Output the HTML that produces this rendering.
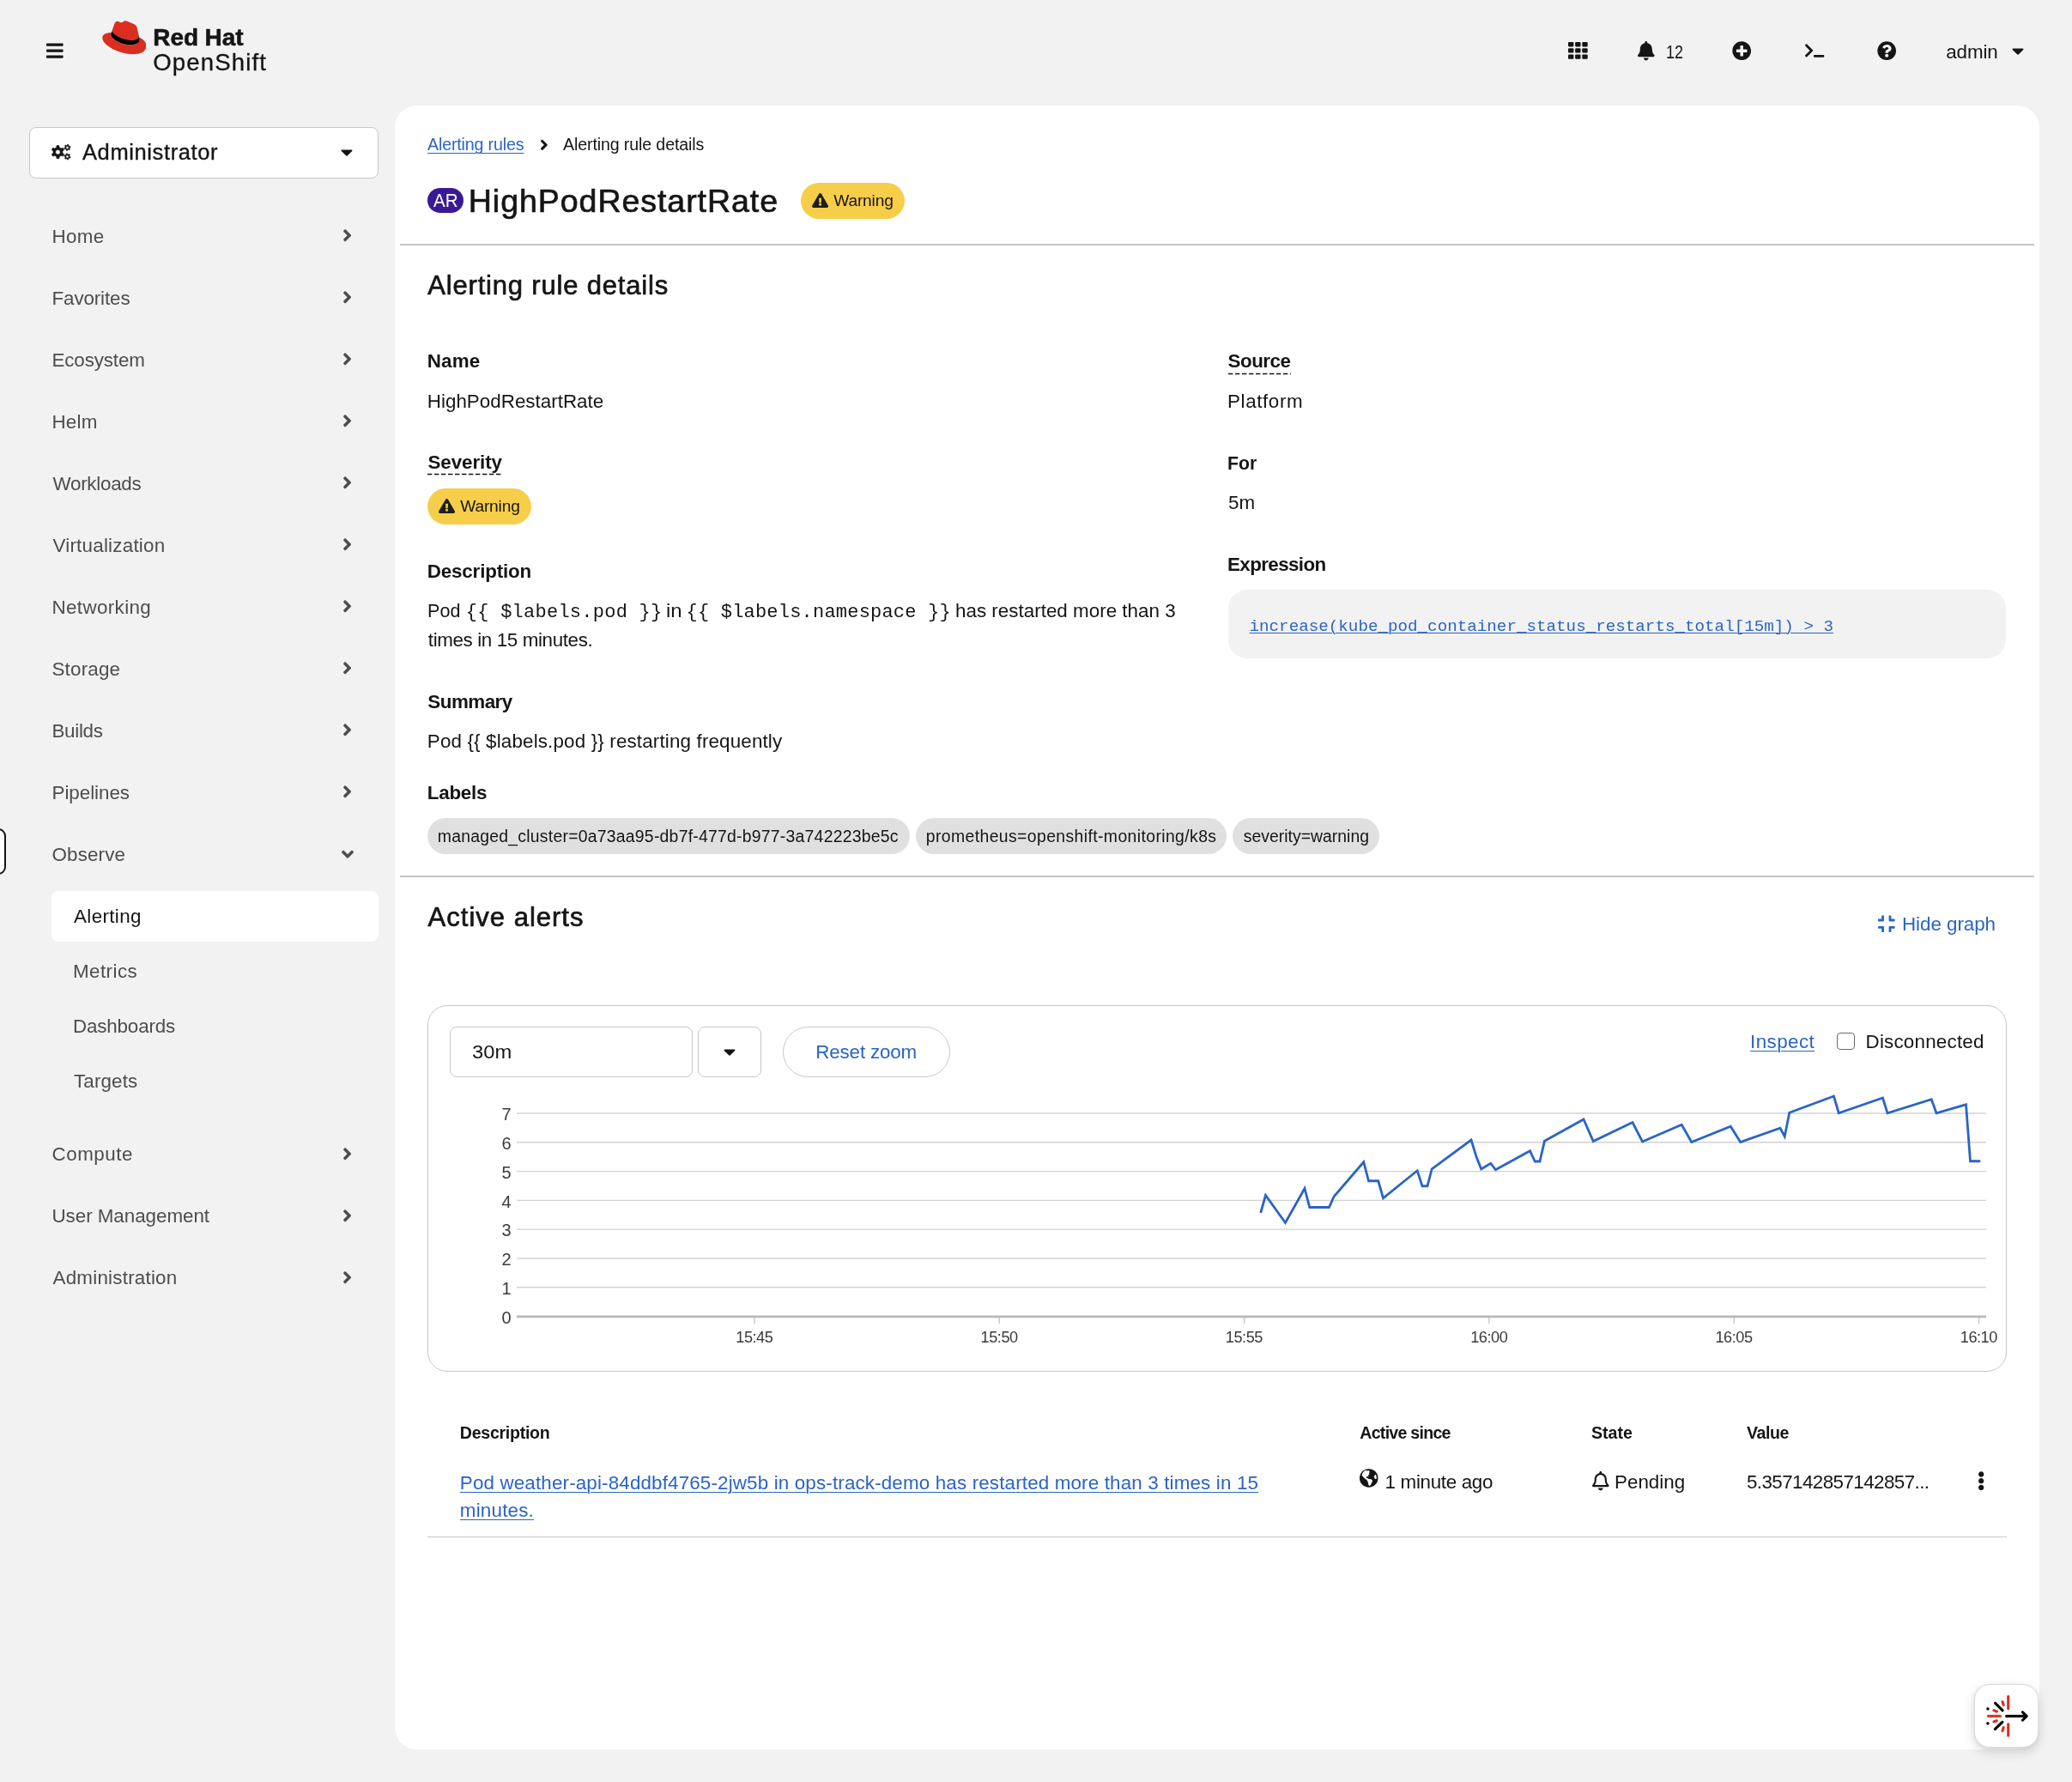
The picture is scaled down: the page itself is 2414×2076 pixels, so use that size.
<!DOCTYPE html>
<html lang="en"><head><meta charset="utf-8"><title>HighPodRestartRate · Alerting rule details · OpenShift</title>
<style>
html,body{margin:0;padding:0;}
body{width:2414px;height:2076px;position:relative;overflow:hidden;background:#f2f2f2;font-family:"Liberation Sans",sans-serif;color:#151515;}
.b{position:absolute;display:block;}
.t{position:absolute;white-space:pre;line-height:1;font-family:"Liberation Sans",sans-serif;transform-origin:0 50%;}
.m{font-family:"Liberation Mono",monospace;}
.u{text-decoration:underline;text-decoration-thickness:1.4px;text-underline-offset:3px;}
.m.u{text-underline-offset:1.5px;}
#root{position:absolute;left:0;top:0;width:2414px;height:2076px;overflow:hidden;will-change:transform;}
</style></head>
<body>
<div id="root">
<div class="b" style="left:460px;top:123px;width:1916px;height:1915px;background:#fff;border-radius:25.5px;"></div>
<svg class="b" style="left:54.2px;top:48.4px;overflow:visible;" width="19.6" height="22.4" viewBox="0 0 448 512"><path fill="#151515" d="M16 132h416c8.837 0 16-7.163 16-16V76c0-8.837-7.163-16-16-16H16C7.163 60 0 67.163 0 76v40c0 8.837 7.163 16 16 16zm0 160h416c8.837 0 16-7.163 16-16v-40c0-8.837-7.163-16-16-16H16c-8.837 0-16 7.163-16 16v40c0 8.837 7.163 16 16 16zm0 160h416c8.837 0 16-7.163 16-16v-40c0-8.837-7.163-16-16-16H16c-8.837 0-16 7.163-16 16v40c0 8.837 7.163 16 16 16z"/></svg>
<svg class="b" style="left:118.6px;top:23.6px;" width="51.7" height="39.1" viewBox="0 0 192 145"><path fill="#da2f20" d="M128,84c12.5,0,30.6-2.6,30.6-17.5a19.53,19.53,0,0,0-.3-3.4L150.9,30.7c-1.7-7.1-3.2-10.3-15.7-16.6C125.5,9.1,104.4,1,98.1,1,92.2,1,90.5,8.500,83.600,8.500c-6.700,0-11.600-5.600-17.900-5.600-6,0-9.900,4.100-12.900,12.500,0,0-8.400,23.700-9.500,27.200A6.150,6.150,0,0,0,43,44.500c0,9.200,36.300,39.500,85,39.500m32.500-11.400c1.700,8.200,1.700,9.100,1.700,10.100,0,14-15.700,21.800-36.400,21.800C79,104.500,38.100,77.100,38.100,59a18.350,18.350,0,0,1,1.500-7.300C22.800,52.500,1,55.500,1,74.700c0,31.500,74.600,70.300,133.700,70.300,45.300,0,56.700-20.500,56.700-36.700,0-12.700-11-27.100-30.900-35.700"/><path fill="#000" d="M160.500,72.600c1.700,8.200,1.700,9.100,1.700,10.100,0,14-15.700,21.800-36.400,21.800C79,104.500,38.100,77.100,38.100,59a18.350,18.350,0,0,1,1.500-7.300l3.700-9.100A6.150,6.150,0,0,0,43,44.500c0,9.200,36.300,39.500,85,39.500,12.500,0,30.600-2.600,30.600-17.500a19.530,19.530,0,0,0-.3-3.400Z"/></svg>
<svg class="b" style="left:1827px;top:49.3px;" width="23" height="20" viewBox="0 0 23 20"><g fill="#151515"><rect x="0.00" y="0.00" width="6.4" height="5.4" rx="1.1"/><rect x="8.15" y="0.00" width="6.4" height="5.4" rx="1.1"/><rect x="16.30" y="0.00" width="6.4" height="5.4" rx="1.1"/><rect x="0.00" y="7.20" width="6.4" height="5.4" rx="1.1"/><rect x="8.15" y="7.20" width="6.4" height="5.4" rx="1.1"/><rect x="16.30" y="7.20" width="6.4" height="5.4" rx="1.1"/><rect x="0.00" y="14.40" width="6.4" height="5.4" rx="1.1"/><rect x="8.15" y="14.40" width="6.4" height="5.4" rx="1.1"/><rect x="16.30" y="14.40" width="6.4" height="5.4" rx="1.1"/></g></svg>
<svg class="b" style="left:1908.3px;top:47.8px;overflow:visible;" width="19.6" height="22.4" viewBox="0 0 448 512"><path fill="#151515" d="M224 512c35.32 0 63.97-28.65 63.97-64H160.03c0 35.35 28.65 64 63.97 64zm215.39-149.71c-19.32-20.76-55.47-51.99-55.47-154.29 0-77.7-54.48-139.9-127.94-155.16V32c0-17.67-14.32-32-31.98-32s-31.98 14.33-31.98 32v20.84C118.56 68.1 64.08 130.3 64.08 208c0 102.3-36.15 133.53-55.47 154.29-6 6.45-8.66 14.16-8.61 21.71.11 16.4 12.98 32 32.1 32h383.8c19.12 0 32-15.6 32.1-32 .05-7.55-2.61-15.27-8.61-21.71z"/></svg>
<svg class="b" style="left:2017.8px;top:47.8px;overflow:visible;" width="22.4" height="22.4" viewBox="0 0 512 512"><path fill="#151515" d="M256 8C119 8 8 119 8 256s111 248 248 248 248-111 248-248S393 8 256 8zm144 276c0 6.6-5.4 12-12 12h-92v92c0 6.6-5.4 12-12 12h-56c-6.6 0-12-5.4-12-12v-92h-92c-6.6 0-12-5.4-12-12v-56c0-6.6 5.4-12 12-12h92v-92c0-6.6 5.4-12 12-12h56c6.6 0 12 5.4 12 12v92h92c6.6 0 12 5.4 12 12v56z"/></svg>
<svg class="b" style="left:2102.7px;top:50.4px;overflow:visible;" width="22.3" height="17.84" viewBox="0 0 640 512"><path fill="#151515" d="M257.981 272.971L63.638 467.314c-9.373 9.373-24.569 9.373-33.941 0L7.029 444.647c-9.357-9.357-9.375-24.522-.04-33.901L161.011 256 6.99 101.255c-9.335-9.379-9.317-24.544.04-33.901l22.667-22.667c9.373-9.373 24.569-9.373 33.941 0L257.981 239.03c9.373 9.372 9.373 24.568 0 33.941zM640 456v-32c0-13.255-10.745-24-24-24H312c-13.255 0-24 10.745-24 24v32c0 13.255 10.745 24 24 24h304c13.255 0 24-10.745 24-24z"/></svg>
<svg class="b" style="left:2187px;top:48px;overflow:visible;" width="22.4" height="22.4" viewBox="0 0 512 512"><path fill="#151515" d="M504 256c0 136.997-111.043 248-248 248S8 392.997 8 256C8 119.083 119.043 8 256 8s248 111.083 248 248zM262.655 90c-54.497 0-89.255 22.957-116.549 63.758-3.536 5.286-2.353 12.415 2.715 16.258l34.699 26.31c5.205 3.947 12.621 3.008 16.665-2.122 17.864-22.658 30.113-35.797 57.303-35.797 20.429 0 45.698 13.148 45.698 32.958 0 14.976-12.363 22.667-32.534 33.976C247.128 238.528 216 254.941 216 296v4c0 6.627 5.373 12 12 12h56c6.627 0 12-5.373 12-12v-1.333c0-28.462 83.186-29.647 83.186-106.667 0-58.002-60.165-102-116.531-102zM256 338c-25.365 0-46 20.635-46 46 0 25.364 20.635 46 46 46s46-20.636 46-46c0-25.365-20.635-46-46-46z"/></svg>
<svg class="b" style="left:2344.3px;top:47.8px;overflow:visible;" width="14" height="22.4" viewBox="0 0 320 512"><path fill="#151515" d="M31.3 192h257.3c17.8 0 26.7 21.5 14.1 34.1L174.1 354.8c-7.8 7.8-20.5 7.8-28.3 0L17.2 226.1C4.6 213.5 13.5 192 31.3 192z"/></svg>
<div class="b" style="left:34px;top:148px;width:407px;height:59.5px;background:#fff;border:1.4px solid #c7c7c7;box-sizing:border-box;border-radius:8px;"></div>
<svg class="b" style="left:0;top:0;" width="120" height="220" viewBox="0 0 120 220"><path fill="#151515" fill-rule="evenodd" stroke="#151515" stroke-width="0.6" stroke-linejoin="round" d="M69.18 171.82 L68.81 169.57 L66.09 169.57 L65.72 171.82 L63.70 172.99 L61.57 172.18 L60.21 174.54 L61.97 175.99 L61.97 178.31 L60.21 179.76 L61.57 182.12 L63.70 181.31 L65.72 182.48 L66.09 184.73 L68.81 184.73 L69.18 182.48 L71.20 181.31 L73.33 182.12 L74.69 179.76 L72.93 178.31 L72.93 175.99 L74.69 174.54 L73.33 172.18 L71.20 172.99Z M64.70 177.15 a2.75 2.75 0 1 0 5.5 0 a2.75 2.75 0 1 0 -5.5 0Z M79.85 169.56 L79.90 168.47 L78.62 168.20 L78.22 169.21 L77.15 169.56 L76.23 168.98 L75.36 169.95 L76.03 170.80 L75.80 171.90 L74.83 172.40 L75.24 173.65 L76.32 173.49 L77.15 174.24 L77.10 175.33 L78.38 175.60 L78.78 174.59 L79.85 174.24 L80.77 174.82 L81.64 173.85 L80.97 173.00 L81.20 171.90 L82.17 171.40 L81.76 170.15 L80.68 170.31Z M76.95 171.90 a1.55 1.55 0 1 0 3.1 0 a1.55 1.55 0 1 0 -3.1 0Z M78.78 179.71 L78.38 178.70 L77.10 178.97 L77.15 180.06 L76.32 180.81 L75.24 180.65 L74.83 181.90 L75.80 182.40 L76.03 183.50 L75.36 184.35 L76.23 185.32 L77.15 184.74 L78.22 185.09 L78.62 186.10 L79.90 185.83 L79.85 184.74 L80.68 183.99 L81.76 184.15 L82.17 182.90 L81.20 182.40 L80.97 181.30 L81.64 180.45 L80.77 179.48 L79.85 180.06Z M76.95 182.40 a1.55 1.55 0 1 0 3.1 0 a1.55 1.55 0 1 0 -3.1 0Z"/></svg>
<svg class="b" style="left:396.5px;top:166.3px;overflow:visible;" width="14" height="22.4" viewBox="0 0 320 512"><path fill="#151515" d="M31.3 192h257.3c17.8 0 26.7 21.5 14.1 34.1L174.1 354.8c-7.8 7.8-20.5 7.8-28.3 0L17.2 226.1C4.6 213.5 13.5 192 31.3 192z"/></svg>
<svg class="b" style="left:398.6px;top:263.3px;overflow:visible;" width="11.2" height="22.4" viewBox="0 0 256 512"><path fill="#4d4d4d" d="M224.3 273l-136 136c-9.4 9.4-24.6 9.4-33.9 0l-22.6-22.6c-9.4-9.4-9.4-24.6 0-33.9l96.4-96.4-96.4-96.4c-9.4-9.4-9.4-24.6 0-33.9L54.3 103c9.4-9.4 24.6-9.4 33.9 0l136 136c9.5 9.4 9.5 24.6.1 34z"/></svg>
<svg class="b" style="left:398.6px;top:335.3px;overflow:visible;" width="11.2" height="22.4" viewBox="0 0 256 512"><path fill="#4d4d4d" d="M224.3 273l-136 136c-9.4 9.4-24.6 9.4-33.9 0l-22.6-22.6c-9.4-9.4-9.4-24.6 0-33.9l96.4-96.4-96.4-96.4c-9.4-9.4-9.4-24.6 0-33.9L54.3 103c9.4-9.4 24.6-9.4 33.9 0l136 136c9.5 9.4 9.5 24.6.1 34z"/></svg>
<svg class="b" style="left:398.6px;top:407.3px;overflow:visible;" width="11.2" height="22.4" viewBox="0 0 256 512"><path fill="#4d4d4d" d="M224.3 273l-136 136c-9.4 9.4-24.6 9.4-33.9 0l-22.6-22.6c-9.4-9.4-9.4-24.6 0-33.9l96.4-96.4-96.4-96.4c-9.4-9.4-9.4-24.6 0-33.9L54.3 103c9.4-9.4 24.6-9.4 33.9 0l136 136c9.5 9.4 9.5 24.6.1 34z"/></svg>
<svg class="b" style="left:398.6px;top:479.3px;overflow:visible;" width="11.2" height="22.4" viewBox="0 0 256 512"><path fill="#4d4d4d" d="M224.3 273l-136 136c-9.4 9.4-24.6 9.4-33.9 0l-22.6-22.6c-9.4-9.4-9.4-24.6 0-33.9l96.4-96.4-96.4-96.4c-9.4-9.4-9.4-24.6 0-33.9L54.3 103c9.4-9.4 24.6-9.4 33.9 0l136 136c9.5 9.4 9.5 24.6.1 34z"/></svg>
<svg class="b" style="left:398.6px;top:551.3px;overflow:visible;" width="11.2" height="22.4" viewBox="0 0 256 512"><path fill="#4d4d4d" d="M224.3 273l-136 136c-9.4 9.4-24.6 9.4-33.9 0l-22.6-22.6c-9.4-9.4-9.4-24.6 0-33.9l96.4-96.4-96.4-96.4c-9.4-9.4-9.4-24.6 0-33.9L54.3 103c9.4-9.4 24.6-9.4 33.9 0l136 136c9.5 9.4 9.5 24.6.1 34z"/></svg>
<svg class="b" style="left:398.6px;top:623.3px;overflow:visible;" width="11.2" height="22.4" viewBox="0 0 256 512"><path fill="#4d4d4d" d="M224.3 273l-136 136c-9.4 9.4-24.6 9.4-33.9 0l-22.6-22.6c-9.4-9.4-9.4-24.6 0-33.9l96.4-96.4-96.4-96.4c-9.4-9.4-9.4-24.6 0-33.9L54.3 103c9.4-9.4 24.6-9.4 33.9 0l136 136c9.5 9.4 9.5 24.6.1 34z"/></svg>
<svg class="b" style="left:398.6px;top:695.3px;overflow:visible;" width="11.2" height="22.4" viewBox="0 0 256 512"><path fill="#4d4d4d" d="M224.3 273l-136 136c-9.4 9.4-24.6 9.4-33.9 0l-22.6-22.6c-9.4-9.4-9.4-24.6 0-33.9l96.4-96.4-96.4-96.4c-9.4-9.4-9.4-24.6 0-33.9L54.3 103c9.4-9.4 24.6-9.4 33.9 0l136 136c9.5 9.4 9.5 24.6.1 34z"/></svg>
<svg class="b" style="left:398.6px;top:767.3px;overflow:visible;" width="11.2" height="22.4" viewBox="0 0 256 512"><path fill="#4d4d4d" d="M224.3 273l-136 136c-9.4 9.4-24.6 9.4-33.9 0l-22.6-22.6c-9.4-9.4-9.4-24.6 0-33.9l96.4-96.4-96.4-96.4c-9.4-9.4-9.4-24.6 0-33.9L54.3 103c9.4-9.4 24.6-9.4 33.9 0l136 136c9.5 9.4 9.5 24.6.1 34z"/></svg>
<svg class="b" style="left:398.6px;top:839.3px;overflow:visible;" width="11.2" height="22.4" viewBox="0 0 256 512"><path fill="#4d4d4d" d="M224.3 273l-136 136c-9.4 9.4-24.6 9.4-33.9 0l-22.6-22.6c-9.4-9.4-9.4-24.6 0-33.9l96.4-96.4-96.4-96.4c-9.4-9.4-9.4-24.6 0-33.9L54.3 103c9.4-9.4 24.6-9.4 33.9 0l136 136c9.5 9.4 9.5 24.6.1 34z"/></svg>
<svg class="b" style="left:398.6px;top:911.3px;overflow:visible;" width="11.2" height="22.4" viewBox="0 0 256 512"><path fill="#4d4d4d" d="M224.3 273l-136 136c-9.4 9.4-24.6 9.4-33.9 0l-22.6-22.6c-9.4-9.4-9.4-24.6 0-33.9l96.4-96.4-96.4-96.4c-9.4-9.4-9.4-24.6 0-33.9L54.3 103c9.4-9.4 24.6-9.4 33.9 0l136 136c9.5 9.4 9.5 24.6.1 34z"/></svg>
<svg class="b" style="left:398.3px;top:984.2px;overflow:visible;" width="14" height="22.4" viewBox="0 0 320 512"><path fill="#4d4d4d" d="M143 352.3L7 216.3c-9.4-9.4-9.4-24.6 0-33.9l22.6-22.6c9.4-9.4 24.6-9.4 33.9 0l96.4 96.4 96.4-96.4c9.4-9.4 24.6-9.4 33.9 0l22.6 22.6c9.4 9.4 9.4 24.6 0 33.9l-136 136c-9.2 9.4-24.4 9.4-33.8 0z"/></svg>
<svg class="b" style="left:398.6px;top:1332.8px;overflow:visible;" width="11.2" height="22.4" viewBox="0 0 256 512"><path fill="#4d4d4d" d="M224.3 273l-136 136c-9.4 9.4-24.6 9.4-33.9 0l-22.6-22.6c-9.4-9.4-9.4-24.6 0-33.9l96.4-96.4-96.4-96.4c-9.4-9.4-9.4-24.6 0-33.9L54.3 103c9.4-9.4 24.6-9.4 33.9 0l136 136c9.5 9.4 9.5 24.6.1 34z"/></svg>
<svg class="b" style="left:398.6px;top:1404.8px;overflow:visible;" width="11.2" height="22.4" viewBox="0 0 256 512"><path fill="#4d4d4d" d="M224.3 273l-136 136c-9.4 9.4-24.6 9.4-33.9 0l-22.6-22.6c-9.4-9.4-9.4-24.6 0-33.9l96.4-96.4-96.4-96.4c-9.4-9.4-9.4-24.6 0-33.9L54.3 103c9.4-9.4 24.6-9.4 33.9 0l136 136c9.5 9.4 9.5 24.6.1 34z"/></svg>
<svg class="b" style="left:398.6px;top:1476.8px;overflow:visible;" width="11.2" height="22.4" viewBox="0 0 256 512"><path fill="#4d4d4d" d="M224.3 273l-136 136c-9.4 9.4-24.6 9.4-33.9 0l-22.6-22.6c-9.4-9.4-9.4-24.6 0-33.9l96.4-96.4-96.4-96.4c-9.4-9.4-9.4-24.6 0-33.9L54.3 103c9.4-9.4 24.6-9.4 33.9 0l136 136c9.5 9.4 9.5 24.6.1 34z"/></svg>
<div class="b" style="left:60px;top:1038px;width:381px;height:59px;background:#fff;border-radius:8px;"></div>
<div class="b" style="left:-20px;top:965px;width:27px;height:54px;background:#fff;border:2.4px solid #151515;box-sizing:border-box;border-radius:9px;"></div>
<svg class="b" style="left:628.6px;top:159px;overflow:visible;" width="9.8" height="19.6" viewBox="0 0 256 512"><path fill="#151515" d="M224.3 273l-136 136c-9.4 9.4-24.6 9.4-33.9 0l-22.6-22.6c-9.4-9.4-9.4-24.6 0-33.9l96.4-96.4-96.4-96.4c-9.4-9.4-9.4-24.6 0-33.9L54.3 103c9.4-9.4 24.6-9.4 33.9 0l136 136c9.5 9.4 9.5 24.6.1 34z"/></svg>
<div class="b" style="left:498px;top:219px;width:42px;height:29px;background:#3a1a94;border-radius:14.5px;"></div>
<div class="b" style="left:933px;top:213px;width:121px;height:42px;background:#f7ce4a;border-radius:21px;"></div>
<svg class="b" style="left:945.8px;top:225.0px;overflow:visible;" width="19.1" height="17.0" viewBox="0 0 576 512"><path fill="#1f1f1f" d="M569.517 440.013C587.975 472.007 564.806 512 527.94 512H48.054c-36.937 0-59.999-40.055-41.577-71.987L246.423 23.985c18.467-32.009 64.72-31.951 83.154 0l239.94 416.028zM288 354c-25.405 0-46 20.595-46 46s20.595 46 46 46 46-20.595 46-46-20.595-46-46-46zm-43.673-165.346l7.418 136c.347 6.364 5.609 11.346 11.982 11.346h48.546c6.373 0 11.635-4.982 11.982-11.346l7.418-136c.375-6.874-5.098-12.654-11.982-12.654h-63.383c-6.884 0-12.356 5.78-11.981 12.654z"/></svg>
<div class="b" style="left:466px;top:284.0px;width:1904px;height:2px;background:#c5c5c5;"></div>
<svg class="b" style="left:498px;top:551px;" width="88" height="3" viewBox="0 0 88 3"><line x1="0" x2="88" y1="1.5" y2="1.5" stroke="#151515" stroke-width="1.7" stroke-dasharray="5.4 2.6"/></svg>
<div class="b" style="left:498px;top:569px;width:121px;height:42px;background:#f7ce4a;border-radius:21px;"></div>
<svg class="b" style="left:510.8px;top:581.0px;overflow:visible;" width="19.1" height="17.0" viewBox="0 0 576 512"><path fill="#1f1f1f" d="M569.517 440.013C587.975 472.007 564.806 512 527.94 512H48.054c-36.937 0-59.999-40.055-41.577-71.987L246.423 23.985c18.467-32.009 64.72-31.951 83.154 0l239.94 416.028zM288 354c-25.405 0-46 20.595-46 46s20.595 46 46 46 46-20.595 46-46-20.595-46-46-46zm-43.673-165.346l7.418 136c.347 6.364 5.609 11.346 11.982 11.346h48.546c6.373 0 11.635-4.982 11.982-11.346l7.418-136c.375-6.874-5.098-12.654-11.982-12.654h-63.383c-6.884 0-12.356 5.78-11.981 12.654z"/></svg>
<div class="b" style="left:498px;top:953px;width:562px;height:42px;background:#e0e0e0;border-radius:21px;"></div>
<div class="b" style="left:1067px;top:953px;width:362px;height:42px;background:#e0e0e0;border-radius:21px;"></div>
<div class="b" style="left:1436px;top:953px;width:171px;height:42px;background:#e0e0e0;border-radius:21px;"></div>
<svg class="b" style="left:1430.5px;top:433.5px;" width="73.5" height="3" viewBox="0 0 73.5 3"><line x1="0" x2="73.5" y1="1.5" y2="1.5" stroke="#151515" stroke-width="1.7" stroke-dasharray="5.4 2.6"/></svg>
<div class="b" style="left:1431px;top:687px;width:906px;height:80px;background:#f2f2f2;border-radius:22px;"></div>
<div class="b" style="left:466px;top:1020px;width:1904px;height:2px;background:#c5c5c5;"></div>
<svg class="b" style="left:2188.2px;top:1064.8px;overflow:visible;" width="19.6" height="22.4" viewBox="0 0 448 512"><path fill="#2a64c5" d="M436 192H312c-13.3 0-24-10.700-24-24V44c0-6.600 5.400-12 12-12h40c6.600 0 12 5.400 12 12v84h84c6.600 0 12 5.400 12 12v40c0 6.600-5.400 12-12 12zm-276-24V44c0-6.600-5.400-12-12-12h-40c-6.600 0-12 5.400-12 12v84H12c-6.600 0-12 5.400-12 12v40c0 6.600 5.400 12 12 12h124c13.300 0 24-10.700 24-24zm0 300V344c0-13.300-10.700-24-24-24H12c-6.600 0-12 5.400-12 12v40c0 6.600 5.400 12 12 12h84v84c0 6.600 5.400 12 12 12h40c6.600 0 12-5.400 12-12zm192 0v-84h84c6.600 0 12-5.400 12-12v-40c0-6.600-5.400-12-12-12H312c-13.300 0-24 10.700-24 24v124c0 6.600 5.400 12 12 12h40c6.600 0 12-5.400 12-12z"/></svg>
<div class="b" style="left:498px;top:1171px;width:1840px;height:426.5px;background:#fff;border:1.4px solid #c7c7c7;box-sizing:border-box;border-radius:23px;"></div>
<div class="b" style="left:524px;top:1196px;width:283px;height:59px;background:#fff;border:1.4px solid #c7c7c7;box-sizing:border-box;border-radius:8px;"></div>
<div class="b" style="left:813px;top:1196px;width:74px;height:59px;background:#fff;border:1.4px solid #c7c7c7;box-sizing:border-box;border-radius:8px;"></div>
<svg class="b" style="left:843px;top:1214px;overflow:visible;" width="14" height="22.4" viewBox="0 0 320 512"><path fill="#151515" d="M31.3 192h257.3c17.8 0 26.7 21.5 14.1 34.1L174.1 354.8c-7.8 7.8-20.5 7.8-28.3 0L17.2 226.1C4.6 213.5 13.5 192 31.3 192z"/></svg>
<div class="b" style="left:912px;top:1196px;width:195px;height:59px;background:#fff;border:1.4px solid #c7c7c7;box-sizing:border-box;border-radius:29.5px;"></div>
<div class="b" style="left:2140px;top:1202.5px;width:20.5px;height:20.5px;background:#fff;border:1.6px solid #6a6a6a;box-sizing:border-box;border-radius:4px;"></div>
<svg class="b" style="left:0;top:0;" width="2414" height="2076" viewBox="0 0 2414 2076"><line x1="602" x2="2314" y1="1499.72" y2="1499.72" stroke="#d2d2d2" stroke-width="1.4"/><line x1="602" x2="2314" y1="1465.94" y2="1465.94" stroke="#d2d2d2" stroke-width="1.4"/><line x1="602" x2="2314" y1="1432.16" y2="1432.16" stroke="#d2d2d2" stroke-width="1.4"/><line x1="602" x2="2314" y1="1398.38" y2="1398.38" stroke="#d2d2d2" stroke-width="1.4"/><line x1="602" x2="2314" y1="1364.60" y2="1364.60" stroke="#d2d2d2" stroke-width="1.4"/><line x1="602" x2="2314" y1="1330.82" y2="1330.82" stroke="#d2d2d2" stroke-width="1.4"/><line x1="602" x2="2314" y1="1297.04" y2="1297.04" stroke="#d2d2d2" stroke-width="1.4"/><line x1="602" x2="2314" y1="1533.80" y2="1533.80" stroke="#b8b8b8" stroke-width="2.8"/><line x1="879.0" x2="879.0" y1="1535.0" y2="1542.0" stroke="#c7c7c7" stroke-width="1.4"/><line x1="1164.3" x2="1164.3" y1="1535.0" y2="1542.0" stroke="#c7c7c7" stroke-width="1.4"/><line x1="1449.6" x2="1449.6" y1="1535.0" y2="1542.0" stroke="#c7c7c7" stroke-width="1.4"/><line x1="1734.9" x2="1734.9" y1="1535.0" y2="1542.0" stroke="#c7c7c7" stroke-width="1.4"/><line x1="2020.2" x2="2020.2" y1="1535.0" y2="1542.0" stroke="#c7c7c7" stroke-width="1.4"/><line x1="2305.5" x2="2305.5" y1="1535.0" y2="1542.0" stroke="#c7c7c7" stroke-width="1.4"/><polyline fill="none" stroke="#2a64c5" stroke-width="2.8" stroke-linejoin="miter" points="1468.75,1413.00 1474.50,1392.50 1497.50,1424.50 1520.00,1384.50 1525.75,1406.50 1548.50,1406.50 1554.25,1393.75 1588.75,1353.75 1594.50,1375.75 1605.75,1375.75 1611.50,1395.75 1651.25,1363.75 1657.00,1381.75 1663.00,1381.75 1668.25,1361.75 1714.00,1328.00 1720.00,1347.50 1725.75,1362.00 1736.75,1355.25 1742.50,1362.75 1782.50,1340.75 1788.25,1353.00 1794.00,1353.00 1799.50,1329.25 1845.00,1304.00 1856.25,1329.50 1902.00,1307.50 1913.50,1330.00 1959.25,1310.25 1970.75,1330.50 2016.25,1312.25 2027.75,1330.50 2074.00,1314.25 2079.25,1324.00 2084.75,1296.25 2136.50,1277.00 2142.25,1296.75 2193.50,1279.00 2199.00,1296.75 2250.25,1280.75 2256.00,1296.75 2290.50,1286.75 2295.50,1352.75 2307.25,1352.75"/></svg>
<svg class="b" style="left:1584.4px;top:1711.0px;" width="22" height="22" viewBox="0 0 22 22"><circle cx="10.75" cy="10.95" r="10.75" fill="#151515"/><path fill="#fff" d="M6.86 1.65 L9.18 2.52 L10.63 2.09 L11.79 3.39 L10.92 5.13 L11.64 6.28 L9.90 7.44 L10.63 8.89 L8.02 9.18 L7.44 10.34 L9.47 11.21 L10.92 12.08 L13.52 12.37 L15.12 14.10 L13.52 17.87 L12.08 19.90 L10.63 19.61 L9.47 14.97 L8.31 12.95 L5.71 11.21 L3.68 8.89 L2.52 7.44 L3.39 5.13 L5.13 3.10Z"/><path fill="#fff" d="M18.16 6.86 L19.17 7.44 L19.75 9.76 L19.61 12.08 L17.87 11.79 L16.71 9.76Z"/></svg>
<svg class="b" style="left:1855.3px;top:1714px;overflow:visible;" width="19.6" height="22.4" viewBox="0 0 448 512"><path fill="#151515" d="M439.39 362.29c-19.32-20.76-55.47-51.99-55.47-154.29 0-77.7-54.48-139.9-127.94-155.16V32c0-17.67-14.32-32-31.98-32s-31.98 14.33-31.98 32v20.84C118.56 68.1 64.08 130.3 64.08 208c0 102.3-36.15 133.53-55.47 154.29-6 6.45-8.66 14.16-8.61 21.71.11 16.4 12.98 32 32.1 32h383.8c19.12 0 32-15.6 32.1-32 .05-7.55-2.61-15.27-8.61-21.71zM67.53 368c21.22-27.97 44.42-74.33 44.53-159.42 0-.2-.06-.38-.06-.58 0-61.86 50.14-112 112-112s112 50.14 112 112c0 .2-.06.38-.06.58.11 85.1 23.31 131.46 44.53 159.42H67.53zM224 512c35.32 0 63.97-28.65 63.97-64H160.03c0 35.35 28.65 64 63.97 64z"/></svg>
<svg class="b" style="left:2303.8px;top:1714.2px;overflow:visible;" width="8.4" height="22.4" viewBox="0 0 192 512"><path fill="#151515" d="M96 184c39.8 0 72 32.2 72 72s-32.2 72-72 72-72-32.2-72-72 32.2-72 72-72zM24 80c0 39.8 32.2 72 72 72s72-32.2 72-72S135.8 8 96 8 24 40.2 24 80zm0 352c0 39.8 32.2 72 72 72s72-32.2 72-72-32.2-72-72-72-72 32.2-72 72z"/></svg>
<div class="b" style="left:498px;top:1790px;width:1840px;height:1px;background:#c7c7c7;"></div>
<div class="b" style="left:2300px;top:1961.6px;width:74.6px;height:74.8px;background:#fff;border:1.4px solid #dcdcdc;box-sizing:border-box;border-radius:18px;box-shadow:0 5px 14px rgba(0,0,0,0.14),0 1px 4px rgba(0,0,0,0.08);"></div>
<svg class="b" style="left:0;top:0;" width="2414" height="2076" viewBox="0 0 2414 2076"><line x1="2339.7" y1="1976.2" x2="2339.7" y2="1990.4" stroke="#da2f20" stroke-width="3.1" stroke-linecap="round"/><line x1="2339.7" y1="2008.6" x2="2339.7" y2="2022.0" stroke="#da2f20" stroke-width="3.1" stroke-linecap="round"/><line x1="2316.5" y1="1999.3" x2="2330.4" y2="1999.3" stroke="#da2f20" stroke-width="3.1" stroke-linecap="round"/><line x1="2333.1" y1="1982.6" x2="2334.2" y2="1986.2" stroke="#da2f20" stroke-width="3.1" stroke-linecap="round"/><line x1="2334.2" y1="2012.6" x2="2333.0" y2="2016.4" stroke="#da2f20" stroke-width="3.1" stroke-linecap="round"/><line x1="2322.9" y1="1992.6" x2="2326.4" y2="1993.8" stroke="#da2f20" stroke-width="3.1" stroke-linecap="round"/><line x1="2322.9" y1="2005.8" x2="2326.3" y2="2004.7" stroke="#da2f20" stroke-width="3.1" stroke-linecap="round"/><line x1="2324.6" y1="1984.2" x2="2333.1" y2="1992.6" stroke="#000" stroke-width="3.1" stroke-linecap="round"/><line x1="2324.4" y1="2014.4" x2="2332.9" y2="2006.1" stroke="#000" stroke-width="3.1" stroke-linecap="round"/><circle cx="2315.9" cy="1990.7" r="1.75" fill="#000"/><circle cx="2315.9" cy="2007.8" r="1.75" fill="#000"/><path d="M2337.6 1999.3 H2360.6 M2356.4 1994.6 L2361.2 1999.3 L2356.4 2004.0" fill="none" stroke="#000" stroke-width="3.1" stroke-linecap="round" stroke-linejoin="round"/></svg>
<div class="t" style="top:30.30px;font-size:28px;font-weight:700;-webkit-text-stroke:0.55px currentColor;left:178.30px;letter-spacing:-0.095px;">Red Hat</div>
<div class="t" style="top:59.04px;font-size:27.6px;-webkit-text-stroke:0.3px currentColor;left:178.30px;letter-spacing:1.106px;">OpenShift</div>
<div class="t" style="top:50.24px;font-size:22.4px;left:1941.20px;transform:scaleX(0.8000);">12</div>
<div class="t" style="top:50.24px;font-size:22.4px;left:2267.30px;letter-spacing:-0.133px;">admin</div>
<div class="t" style="top:165.41px;font-size:25.5px;-webkit-text-stroke:0.35px currentColor;left:96.00px;letter-spacing:0.607px;">Administrator</div>
<div class="t" style="top:264.54px;font-size:22.4px;color:#4d4d4d;left:60.50px;letter-spacing:0.309px;">Home</div>
<div class="t" style="top:336.54px;font-size:22.4px;color:#4d4d4d;left:60.50px;letter-spacing:-0.123px;">Favorites</div>
<div class="t" style="top:408.54px;font-size:22.4px;color:#4d4d4d;left:60.50px;letter-spacing:-0.143px;">Ecosystem</div>
<div class="t" style="top:480.54px;font-size:22.4px;color:#4d4d4d;left:60.50px;letter-spacing:0.201px;">Helm</div>
<div class="t" style="top:552.54px;font-size:22.4px;color:#4d4d4d;left:61.50px;letter-spacing:-0.271px;">Workloads</div>
<div class="t" style="top:624.54px;font-size:22.4px;color:#4d4d4d;left:61.50px;letter-spacing:0.221px;">Virtualization</div>
<div class="t" style="top:696.54px;font-size:22.4px;color:#4d4d4d;left:60.50px;letter-spacing:0.362px;">Networking</div>
<div class="t" style="top:768.54px;font-size:22.4px;color:#4d4d4d;left:60.50px;letter-spacing:0.188px;">Storage</div>
<div class="t" style="top:840.54px;font-size:22.4px;color:#4d4d4d;left:60.50px;letter-spacing:-0.318px;">Builds</div>
<div class="t" style="top:912.54px;font-size:22.4px;color:#4d4d4d;left:60.50px;letter-spacing:-0.046px;">Pipelines</div>
<div class="t" style="top:984.54px;font-size:22.4px;color:#4d4d4d;left:60.50px;letter-spacing:0.139px;">Observe</div>
<div class="t" style="top:1334.04px;font-size:22.4px;color:#4d4d4d;left:60.50px;letter-spacing:0.533px;">Compute</div>
<div class="t" style="top:1406.04px;font-size:22.4px;color:#4d4d4d;left:60.50px;letter-spacing:-0.048px;">User Management</div>
<div class="t" style="top:1478.04px;font-size:22.4px;color:#4d4d4d;left:61.50px;letter-spacing:0.222px;">Administration</div>
<div class="t" style="top:1057.04px;font-size:22.4px;left:86.00px;letter-spacing:0.362px;">Alerting</div>
<div class="t" style="top:1121.04px;font-size:22.4px;color:#4d4d4d;left:85.00px;letter-spacing:0.425px;">Metrics</div>
<div class="t" style="top:1185.04px;font-size:22.4px;color:#4d4d4d;left:85.00px;letter-spacing:-0.171px;">Dashboards</div>
<div class="t" style="top:1249.04px;font-size:22.4px;color:#4d4d4d;left:86.00px;letter-spacing:0.128px;">Targets</div>
<div class="t u" style="top:159.41px;font-size:19.6px;color:#2a64c5;left:498.00px;letter-spacing:-0.142px;">Alerting rules</div>
<div class="t" style="top:159.41px;font-size:19.6px;left:656.00px;letter-spacing:-0.117px;">Alerting rule details</div>
<div class="t" style="top:223.04px;font-size:22.4px;color:#fff;left:504.60px;transform:scaleX(0.9181);">AR</div>
<div class="t" style="top:215.87px;font-size:37.6px;-webkit-text-stroke:0.7px currentColor;left:545.80px;letter-spacing:0.921px;">HighPodRestartRate</div>
<div class="t" style="top:224.35px;font-size:19.2px;left:971.20px;letter-spacing:-0.177px;">Warning</div>
<div class="t" style="top:316.96px;font-size:31px;-webkit-text-stroke:0.7px currentColor;left:498.30px;letter-spacing:0.813px;">Alerting rule details</div>
<div class="t" style="top:409.54px;font-size:22.4px;font-weight:700;left:497.80px;letter-spacing:0.156px;">Name</div>
<div class="t" style="top:456.54px;font-size:22.4px;left:497.80px;letter-spacing:0.006px;">HighPodRestartRate</div>
<div class="t" style="top:528.04px;font-size:22.4px;font-weight:700;left:498.50px;letter-spacing:-0.098px;">Severity</div>
<div class="t" style="top:580.35px;font-size:19.2px;left:536.20px;letter-spacing:-0.177px;">Warning</div>
<div class="t" style="top:655.04px;font-size:22.4px;font-weight:700;left:497.80px;letter-spacing:-0.179px;">Description</div>
<div class="t" style="top:701.04px;font-size:22.4px;left:497.84px;transform:scaleX(0.9639);">Pod</div>
<div class="t m" style="top:703.14px;font-size:22px;left:542.80px;letter-spacing:0.248px;">{{ $labels.pod }}</div>
<div class="t" style="top:701.04px;font-size:22.4px;left:775.93px;transform:scaleX(1.0685);">in</div>
<div class="t m" style="top:703.14px;font-size:22px;left:799.50px;letter-spacing:0.207px;">{{ $labels.namespace }}</div>
<div class="t" style="top:701.04px;font-size:22.4px;left:1113.00px;letter-spacing:0.011px;">has restarted more than 3</div>
<div class="t" style="top:735.04px;font-size:22.4px;left:498.80px;letter-spacing:-0.378px;">times in 15 minutes.</div>
<div class="t" style="top:806.54px;font-size:22.4px;font-weight:700;left:498.30px;letter-spacing:-0.516px;">Summary</div>
<div class="t" style="top:853.04px;font-size:22.4px;left:497.80px;letter-spacing:0.151px;">Pod {{ $labels.pod }} restarting frequently</div>
<div class="t" style="top:912.54px;font-size:22.4px;font-weight:700;left:497.80px;letter-spacing:-0.256px;">Labels</div>
<div class="t" style="top:965.38px;font-size:19.4px;left:509.80px;letter-spacing:0.239px;">managed_cluster=0a73aa95-db7f-477d-b977-3a742223be5c</div>
<div class="t" style="top:965.38px;font-size:19.4px;left:1078.80px;letter-spacing:0.389px;">prometheus=openshift-monitoring/k8s</div>
<div class="t" style="top:965.38px;font-size:19.4px;left:1448.80px;letter-spacing:0.010px;">severity=warning</div>
<div class="t" style="top:409.54px;font-size:22.4px;font-weight:700;left:1430.50px;letter-spacing:-0.491px;">Source</div>
<div class="t" style="top:457.04px;font-size:22.4px;left:1430.00px;letter-spacing:0.613px;">Platform</div>
<div class="t" style="top:529.04px;font-size:22.4px;font-weight:700;left:1430.05px;transform:scaleX(0.9476);">For</div>
<div class="t" style="top:575.04px;font-size:22.4px;left:1431.00px;">5m</div>
<div class="t" style="top:647.04px;font-size:22.4px;font-weight:700;left:1430.00px;letter-spacing:-0.615px;">Expression</div>
<div class="t m u" style="top:720.78px;font-size:19.2px;color:#2a64c5;left:1455.50px;letter-spacing:0.020px;">increase(kube_pod_container_status_restarts_total[15m]) &gt; 3</div>
<div class="t" style="top:1053.06px;font-size:31px;-webkit-text-stroke:0.7px currentColor;left:498.60px;letter-spacing:1.005px;">Active alerts</div>
<div class="t" style="top:1065.64px;font-size:22.4px;color:#2a64c5;left:2216.00px;letter-spacing:-0.054px;">Hide graph</div>
<div class="t" style="top:1215.04px;font-size:22.4px;left:549.50px;transform:scaleX(1.0605);">30m</div>
<div class="t" style="top:1215.04px;font-size:22.4px;color:#2a64c5;left:950.30px;letter-spacing:-0.168px;">Reset zoom</div>
<div class="t u" style="top:1202.54px;font-size:22.4px;color:#2a64c5;left:2039.00px;letter-spacing:0.422px;">Inspect</div>
<div class="t" style="top:1202.54px;font-size:22.4px;left:2173.50px;letter-spacing:0.208px;">Disconnected</div>
<div class="t" style="top:1524.77px;font-size:20px;color:#3a3a3a;left:584.50px;">0</div>
<div class="t" style="top:1490.99px;font-size:20px;color:#3a3a3a;left:584.50px;">1</div>
<div class="t" style="top:1457.21px;font-size:20px;color:#3a3a3a;left:584.50px;">2</div>
<div class="t" style="top:1423.43px;font-size:20px;color:#3a3a3a;left:584.50px;">3</div>
<div class="t" style="top:1389.65px;font-size:20px;color:#3a3a3a;left:584.50px;">4</div>
<div class="t" style="top:1355.87px;font-size:20px;color:#3a3a3a;left:584.50px;">5</div>
<div class="t" style="top:1322.09px;font-size:20px;color:#3a3a3a;left:584.50px;">6</div>
<div class="t" style="top:1288.31px;font-size:20px;color:#3a3a3a;left:584.50px;">7</div>
<div class="t" style="top:1548.79px;font-size:18.2px;color:#3a3a3a;left:857.25px;letter-spacing:-0.475px;">15:45</div>
<div class="t" style="top:1548.79px;font-size:18.2px;color:#3a3a3a;left:1142.55px;letter-spacing:-0.475px;">15:50</div>
<div class="t" style="top:1548.79px;font-size:18.2px;color:#3a3a3a;left:1427.85px;letter-spacing:-0.475px;">15:55</div>
<div class="t" style="top:1548.79px;font-size:18.2px;color:#3a3a3a;left:1713.15px;letter-spacing:-0.475px;">16:00</div>
<div class="t" style="top:1548.79px;font-size:18.2px;color:#3a3a3a;left:1998.45px;letter-spacing:-0.475px;">16:05</div>
<div class="t" style="top:1548.79px;font-size:18.2px;color:#3a3a3a;left:2283.75px;letter-spacing:-0.475px;">16:10</div>
<div class="t" style="top:1660.41px;font-size:19.6px;font-weight:700;left:535.80px;letter-spacing:-0.282px;">Description</div>
<div class="t" style="top:1660.41px;font-size:19.6px;font-weight:700;left:1584.30px;letter-spacing:-0.742px;">Active since</div>
<div class="t" style="top:1660.41px;font-size:19.6px;font-weight:700;left:1854.00px;">State</div>
<div class="t" style="top:1660.41px;font-size:19.6px;font-weight:700;left:2035.00px;letter-spacing:-0.449px;">Value</div>
<div class="t u" style="top:1716.54px;font-size:22.4px;color:#2a64c5;left:535.80px;letter-spacing:0.148px;">Pod weather-api-84ddbf4765-2jw5b in ops-track-demo has restarted more than 3 times in 15</div>
<div class="t u" style="top:1749.04px;font-size:22.4px;color:#2a64c5;left:535.80px;letter-spacing:0.200px;">minutes.</div>
<div class="t" style="top:1716.04px;font-size:22.4px;left:1613.60px;letter-spacing:-0.328px;">1 minute ago</div>
<div class="t" style="top:1716.04px;font-size:22.4px;left:1881.00px;">Pending</div>
<div class="t" style="top:1716.04px;font-size:22.4px;left:2035.00px;letter-spacing:-0.584px;">5.357142857142857...</div>
</div>
</body></html>
